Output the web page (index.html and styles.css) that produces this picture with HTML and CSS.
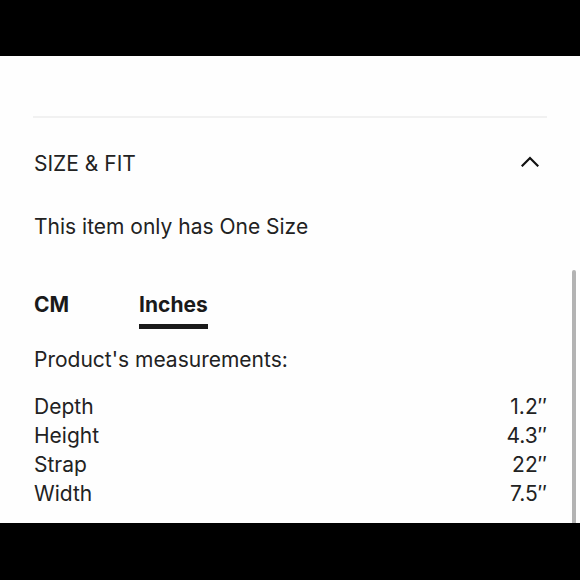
FILE: index.html
```html
<!DOCTYPE html>
<html lang="en">
<head>
<meta charset="utf-8">
<title>Size &amp; Fit</title>
<link rel="stylesheet" href="styles.css">
</head>
<body>
<div class="screen">
  <div class="bar bar-top"></div>
  <main class="content">
    <div class="divider"></div>
    <section class="section">
      <div class="section-head">
        <h2 class="section-title">SIZE &amp; FIT</h2>
        <svg class="chevron" width="18" height="11" viewBox="0 0 18 11" aria-hidden="true">
          <path d="M1.5 9.5 L9 2 L16.5 9.5" fill="none" stroke="#111" stroke-width="2.2" stroke-linecap="square"/>
        </svg>
      </div>
      <p class="one-size">This item only has One Size</p>
      <div class="tabs">
        <span class="tab">CM</span>
        <span class="tab tab-active">Inches</span>
      </div>
      <p class="measure-title">Product's measurements:</p>
      <dl class="measures">
        <div class="row"><dt>Depth</dt><dd>1.2″</dd></div>
        <div class="row"><dt>Height</dt><dd>4.3″</dd></div>
        <div class="row"><dt>Strap</dt><dd>22″</dd></div>
        <div class="row"><dt>Width</dt><dd>7.5″</dd></div>
      </dl>
    </section>
    <div class="scrollbar"></div>
  </main>
  <div class="bar bar-bottom"></div>
</div>
</body>
</html>
```

FILE: styles.css
```css
* { box-sizing: border-box; }
html, body { margin: 0; padding: 0; background: #000; }
body {
  font-family: "Inter", "Liberation Sans", sans-serif;
  color: #222;
}
.screen {
  width: 580px;
  height: 580px;
  display: flex;
  flex-direction: column;
  overflow: hidden;
}
.bar { background: #000; flex: none; }
.bar-top { height: 56px; }
.bar-bottom { height: 57px; }
.content {
  position: relative;
  flex: 1;
  background: #fefefe;
  padding: 60px 33px 0 33px;
  overflow: hidden;
}
.divider {
  height: 2px;
  background: #f1f1f1;
}
.section { padding-left: 1px; }
.section-head {
  margin-top: 32px;
  display: flex;
  align-items: center;
  justify-content: space-between;
  height: 28px;
}
.section-title {
  margin: 0;
  font-size: 21px;
  font-weight: 400;
  line-height: 28px;
}
.chevron { margin-right: 8px; margin-top: -6px; }
.one-size {
  margin: 35px 0 0 0;
  font-size: 21px;
  line-height: 28px;
}
.tabs {
  margin-top: 50px;
  display: flex;
  gap: 70px;
}
.tab {
  font-size: 21px;
  font-weight: 700;
  line-height: 28px;
  padding-bottom: 5px;
  border-bottom: 5px solid transparent;
  color: #1a1a1a;
}
.tab-active { border-bottom-color: #1a1a1a; }
.measure-title {
  margin: 17px 0 0 0;
  font-size: 21px;
  line-height: 28px;
}
.measures {
  margin: 18px 0 0 0;
}
.row {
  display: flex;
  justify-content: space-between;
  font-size: 21px;
  line-height: 29px;
}
.row dt, .row dd { margin: 0; }
.scrollbar {
  position: absolute;
  right: 4px;
  top: 214px;
  bottom: 0;
  width: 4px;
  border-radius: 2px 2px 0 0;
  background: #b3b3b3;
}
```
